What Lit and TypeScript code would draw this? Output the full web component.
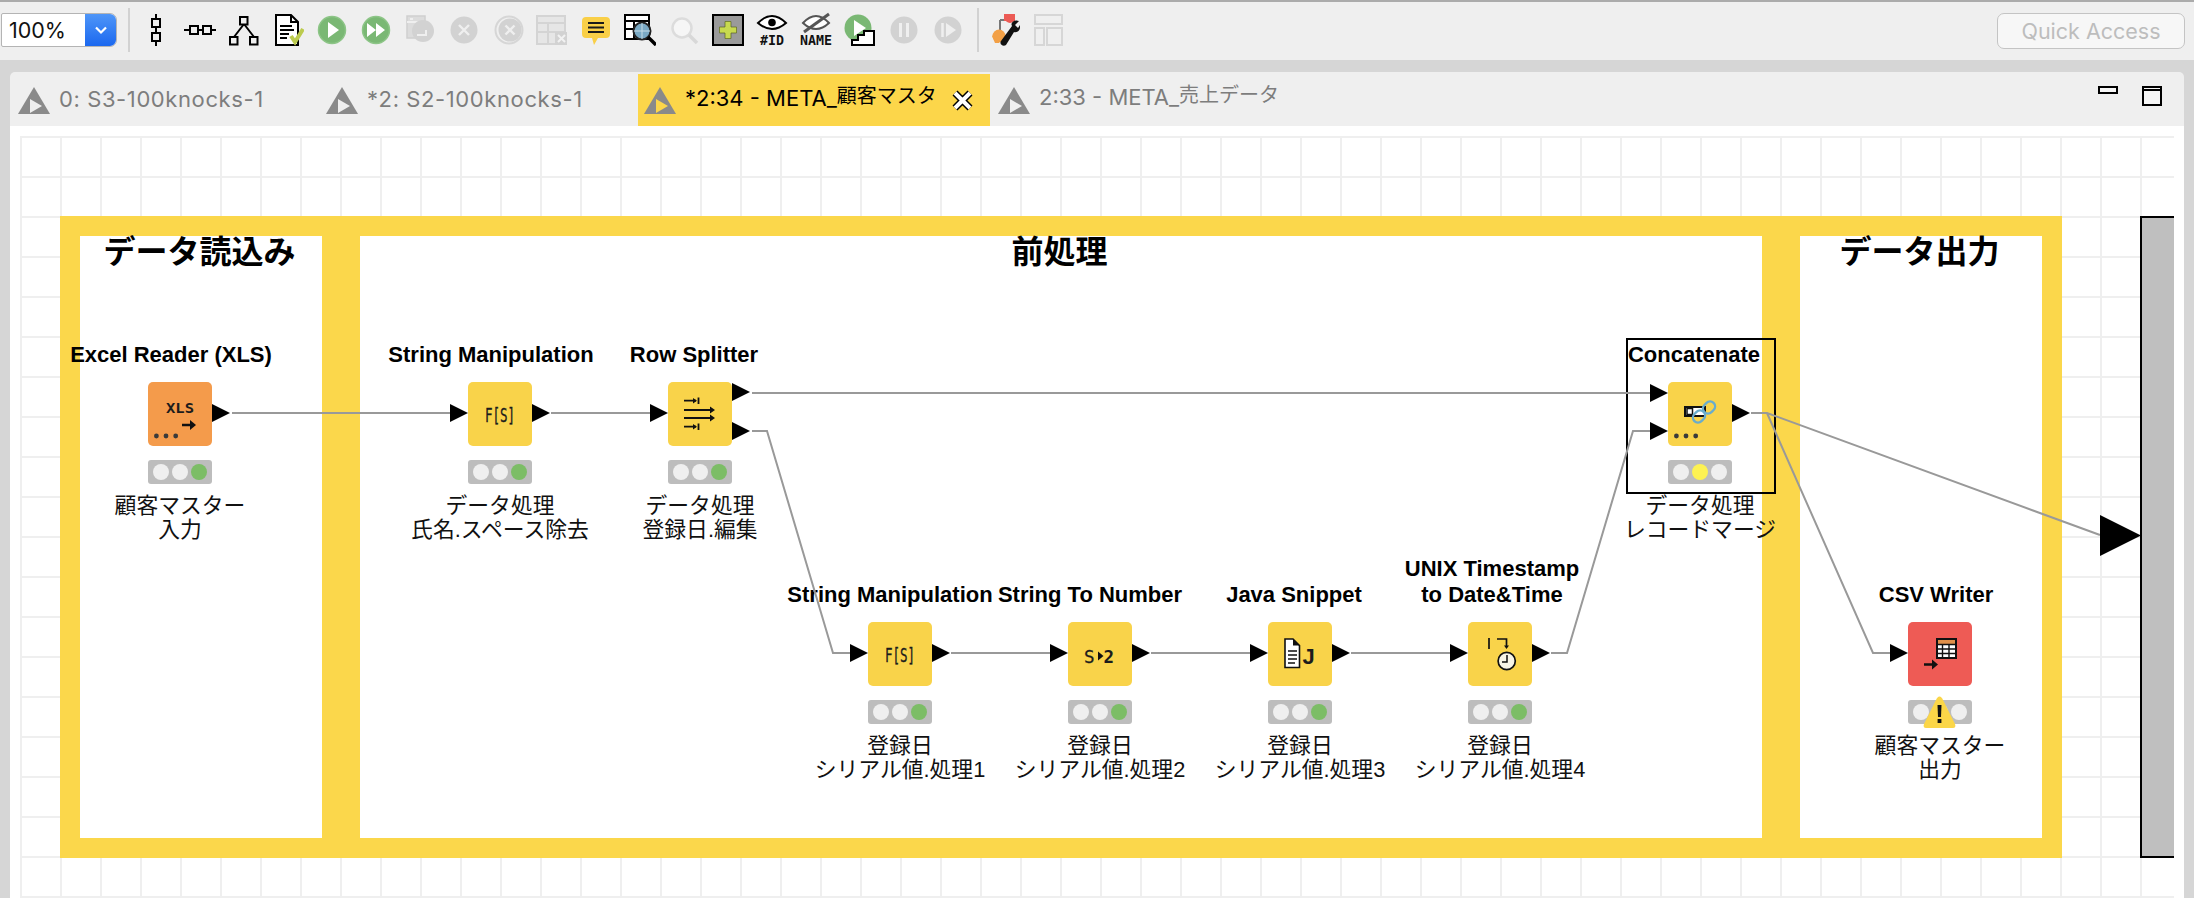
import { LitElement, css, html, svg } from "lit";
import { customElement, property } from "lit/decorators.js";
import { styleMap } from "lit/directives/style-map.js";

// page coordinates of the canvas origin; all workflow data below is in page px
const OX = 10;
const OY = 126;

const mono = `"DejaVu Sans Mono", monospace`;

type NodeData = {
  x: number;
  y: number;
  name: string;
  nameShift: number;
  label: string;
  color: string;
  glyph: unknown;
  lamp: "green" | "yellow" | "warn";
};

const dots = svg`<g fill="#3a3a3a"><circle cx="8.4" cy="54" r="2.4"/><circle cx="18" cy="54" r="2.4"/><circle cx="27.7" cy="54" r="2.4"/></g>`;

const arrow = (x1: number, x2: number, y: number) =>
  svg`<path d="M${x1} ${y}H${x2 - 4}" stroke="#111" stroke-width="2.6" fill="none"/><path d="M${x2 - 6} ${y - 5}L${x2} ${y}L${x2 - 6} ${y + 5}Z" fill="#111"/>`;

const fs = svg`<text x="17" y="40" font-family=${mono} font-size="19" textLength="30" lengthAdjust="spacingAndGlyphs" fill="#1c1c1c" stroke="#1c1c1c" stroke-width="0.35">F[S]</text>`;

const xls = svg`
  <text x="18" y="30.5" font-family=${mono} font-size="14" font-weight="700" textLength="28" lengthAdjust="spacingAndGlyphs" fill="#1c1c1c">XLS</text>
  ${arrow(34, 48, 43)}${dots}`;

const splitter = svg`
  <g stroke="#111" stroke-width="1.8" fill="none">
    <path d="M16 18.7H28M30.5 15.5V22M16 44.7H28M30.5 41.5V48"/>
    <path d="M16 28H43M16 36H43"/>
  </g>
  <g fill="#111">
    <path d="M25 16L29 18.7L25 21.4ZM25 42L29 44.7L25 47.4ZM42 24.5L47 28L42 31.5ZM42 32.5L47 36L42 39.5Z"/>
  </g>`;

const s2n = svg`
  <text x="16" y="41" font-family=${mono} font-size="17.5" fill="#1c1c1c" stroke="#1c1c1c" stroke-width="0.3">S</text>
  <path d="M30 29.5L35.5 34L30 38.5Z" fill="#111"/>
  <text x="35.5" y="41" font-family=${mono} font-size="17.5" font-weight="700" fill="#1c1c1c">2</text>`;

const java = svg`
  <path d="M17 17H25L31.5 23.5V45.5H17Z" fill="#fff" stroke="#111" stroke-width="1.6"/>
  <path d="M25 17V23.5H31.5Z" fill="#111"/>
  <path d="M20 29H29M20 33H29M20 37H29M20 41H27" stroke="#111" stroke-width="1.5"/>
  <text x="34.5" y="41.5" font-family="'Liberation Sans', sans-serif" font-size="22" font-weight="700" fill="#1c1c1c">J</text>`;

const unix = svg`
  <path d="M21 16V27M29 17H38.5V24" stroke="#111" stroke-width="1.7" fill="none"/>
  <path d="M36 23.5H41L38.5 27Z" fill="#111"/>
  <circle cx="38.7" cy="39" r="8.6" fill="#f7f4e6" stroke="#111" stroke-width="1.7"/>
  <path d="M39 33V40H34" stroke="#111" stroke-width="1.5" fill="none"/>`;

const concat = svg`
  <rect x="17" y="25" width="20" height="9" fill="#fff" stroke="#111" stroke-width="2"/>
  <rect x="19" y="26.5" width="5.5" height="6" fill="#fff" stroke="#111" stroke-width="1.5"/>
  <g fill="none" stroke="#6aaccb" stroke-width="2.4">
    <rect x="36" y="19" width="10" height="13" rx="5" transform="rotate(45 41 25.5)"/>
    <rect x="26" y="28" width="10" height="13" rx="5" transform="rotate(45 31 34.5)"/>
  </g>
  ${dots}`;

const csv = svg`
  <rect x="29" y="17" width="19" height="19" fill="#fff" stroke="#111" stroke-width="2"/>
  <rect x="30" y="18" width="17" height="4" fill="#e0904a"/>
  <path d="M29 22.5H48M29 27H48M29 31.5H48M34.5 22V36M41 22V36" stroke="#111" stroke-width="1.4"/>
  ${arrow(16, 30, 42.5)}`;

const YELLOW = "#f9d34a";

const nodes: NodeData[] = [
  { x: 148, y: 382, name: "Excel Reader (XLS)", nameShift: -9, label: "顧客マスター\n入力", color: "#f49b4b", glyph: xls, lamp: "green" },
  { x: 468, y: 382, name: "String Manipulation", nameShift: -9, label: "データ処理\n氏名.スペース除去", color: YELLOW, glyph: fs, lamp: "green" },
  { x: 668, y: 382, name: "Row Splitter", nameShift: -6, label: "データ処理\n登録日.編集", color: YELLOW, glyph: splitter, lamp: "green" },
  { x: 1668, y: 382, name: "Concatenate", nameShift: -6, label: "データ処理\nレコードマージ", color: YELLOW, glyph: concat, lamp: "yellow" },
  { x: 868, y: 622, name: "String Manipulation", nameShift: -10, label: "登録日\nシリアル値.処理1", color: YELLOW, glyph: fs, lamp: "green" },
  { x: 1068, y: 622, name: "String To Number", nameShift: -10, label: "登録日\nシリアル値.処理2", color: YELLOW, glyph: s2n, lamp: "green" },
  { x: 1268, y: 622, name: "Java Snippet", nameShift: -6, label: "登録日\nシリアル値.処理3", color: YELLOW, glyph: java, lamp: "green" },
  { x: 1468, y: 622, name: "UNIX Timestamp\nto Date&Time", nameShift: -8, label: "登録日\nシリアル値.処理4", color: YELLOW, glyph: unix, lamp: "green" },
  { x: 1908, y: 622, name: "CSV Writer", nameShift: -4, label: "顧客マスター\n出力", color: "#ee5b55", glyph: csv, lamp: "warn" },
];

const wires: [number, number][][] = [
  [[232, 413], [450, 413]],
  [[551, 413], [650, 413]],
  [[752, 393], [1650, 393]],
  [[752, 431], [767, 431], [833, 653], [850, 653]],
  [[951, 653], [1050, 653]],
  [[1151, 653], [1250, 653]],
  [[1351, 653], [1450, 653]],
  [[1551, 653], [1567, 653], [1633, 431], [1650, 431]],
  [[1751, 413], [1767, 413], [2100, 535]],
  [[1767, 413], [1873, 653], [1890, 653]],
];

// left edge, vertical centre of each 18px port triangle
const ports: [number, number][] = [
  [212, 413], [450, 413], [532, 413], [650, 413], [732, 392], [732, 431],
  [1650, 393], [1650, 431], [1732, 413],
  [850, 653], [932, 653], [1050, 653], [1132, 653], [1250, 653], [1332, 653], [1450, 653], [1532, 653], [1890, 653],
];

@customElement("wf-node")
export class WfNode extends LitElement {
  @property({ attribute: false }) data!: NodeData;

  static styles = css`
    :host {
      position: absolute;
      width: 64px;
      display: flex;
      flex-direction: column;
      align-items: center;
    }
    .name {
      position: absolute;
      bottom: 100%;
      margin-bottom: 14px;
      left: 50%;
      white-space: pre;
      text-align: center;
      font: 700 22px/26px "Liberation Sans", sans-serif;
      color: #000;
    }
    .box {
      width: 64px;
      height: 64px;
      border-radius: 5px;
      display: block;
    }
    .lamps {
      position: relative;
      width: 64px;
      height: 24px;
      margin-top: 14px;
      background: #bdbdbd;
      border-radius: 3px;
      display: flex;
      align-items: center;
      justify-content: space-around;
      padding: 0 3px;
      box-sizing: border-box;
    }
    .lamp {
      width: 16px;
      height: 16px;
      border-radius: 50%;
      background: #efefef;
    }
    .lamp.green {
      background: #7cbd66;
    }
    .lamp.yellow {
      background: #fdf252;
    }
    .warn {
      position: absolute;
      left: 15px;
      top: -4px;
    }
    .label {
      margin-top: 10px;
      white-space: pre;
      text-align: center;
      width: max-content;
      font: 400 21.8px/24px "Liberation Sans", "Noto Sans CJK JP", sans-serif;
      color: #111;
    }
  `;

  render() {
    const d = this.data;
    return html`
      <div class="name" style=${styleMap({ transform: `translateX(calc(-50% + ${d.nameShift}px))` })}>${d.name}</div>
      <svg class="box" viewBox="0 0 64 64" style=${styleMap({ background: d.color })}>${d.glyph}</svg>
      <div class="lamps">
        <span class="lamp"></span>
        <span class="lamp ${d.lamp === "yellow" ? "yellow" : ""}"></span>
        <span class="lamp ${d.lamp === "green" ? "green" : ""}"></span>
        ${d.lamp === "warn"
          ? html`<svg class="warn" width="33" height="32" viewBox="0 0 33 32">
              <path d="M16.5 0.5C18 0.5 19 2 20 4L32 28C33 30.5 32 32 30 32H3C1 32 0 30.5 1 28L13 4C14 2 15 0.5 16.5 0.5Z" fill="#fbd648"/>
              <path d="M14.5 9H18.5L18 21H15Z" fill="#111"/>
              <rect x="14.6" y="23" width="3.8" height="4" fill="#111"/>
            </svg>`
          : ""}
      </div>
      <div class="label">${d.label}</div>
    `;
  }
}

const ic = (body: unknown) => html`<svg class="ic" width="32" height="32" viewBox="0 0 32 32">${body}</svg>`;
// same scale as ic, with room under the baseline of the caption
const icTall = (body: unknown) => html`<svg class="ic" width="34" height="40" viewBox="-1 -4 34 40">${body}</svg>`;

const greenDisc = svg`<circle cx="16" cy="16" r="13.5" fill="#7ab874" stroke="#8dc587" stroke-width="1.5"/>`;
const grayDisc = svg`<circle cx="16" cy="16" r="13.5" fill="#d2d2d2"/>`;

const tools = [
  ic(svg`<path d="M16 0V32" stroke="#000" stroke-width="2"/><g fill="#efefef" stroke="#000" stroke-width="2"><rect x="12" y="5" width="8" height="8"/><rect x="12" y="19" width="8" height="8"/></g>`),
  ic(svg`<path d="M0 16H32" stroke="#000" stroke-width="2"/><g fill="#efefef" stroke="#000" stroke-width="2"><rect x="6" y="12" width="8" height="8"/><rect x="19" y="12" width="8" height="8"/></g>`),
  ic(svg`<path d="M16 10L6 23M16 10L26 23" stroke="#000" stroke-width="2"/><g fill="#efefef" stroke="#000" stroke-width="2"><rect x="12" y="3" width="7.5" height="7.5"/><rect x="2" y="23" width="7.5" height="7.5"/><rect x="22" y="23" width="7.5" height="7.5"/></g>`),
  ic(svg`<path d="M4 1H19L26 8V31H4Z" fill="#fff" stroke="#000" stroke-width="2"/><path d="M19 1V8H26" fill="none" stroke="#000" stroke-width="2"/><path d="M8 12H20M8 16H22M8 20H17M8 24H15" stroke="#000" stroke-width="2"/><path d="M19 22L23 28L31 15" fill="none" stroke="#bccb4e" stroke-width="4"/>`),
  ic(svg`${greenDisc}<path d="M12 8L23 16L12 24Z" fill="#fff"/>`),
  ic(svg`${greenDisc}<path d="M7 9L16 16L7 23ZM16 9L25 16L16 23Z" fill="#fff"/>`),
  ic(svg`<path d="M3 2H21V24H3Z" fill="#dcdcdc" stroke="#d0d0d0" stroke-width="1.5"/><path d="M3 8H21" stroke="#efefef" stroke-width="2"/><circle cx="19" cy="17" r="11" fill="#d2d2d2"/><path d="M13 21H22V16" stroke="#efefef" stroke-width="2" fill="none"/><rect x="6" y="4" width="3" height="2" fill="#efefef"/>`),
  ic(svg`${grayDisc}<path d="M11 11L21 21M21 11L11 21" stroke="#efefef" stroke-width="2.4"/>`),
  ic(svg`<circle cx="17" cy="16" r="13.5" fill="none" stroke="#d6d6d6" stroke-width="2"/><circle cx="18" cy="16" r="11.5" fill="#d2d2d2"/><path d="M13.5 11.5L22.5 20.5M22.5 11.5L13.5 20.5" stroke="#efefef" stroke-width="2.4"/>`),
  ic(svg`<rect x="1" y="2" width="28" height="28" fill="#e6e6e6" stroke="#d4d4d4" stroke-width="2"/><path d="M1 9H29M1 18H29M12 9V30" stroke="#d4d4d4" stroke-width="2"/><rect x="19" y="18" width="12" height="13" fill="#d2d2d2"/><path d="M22 21L29 28M29 21L22 28" stroke="#f2f2f2" stroke-width="2"/>`),
  ic(svg`<path d="M6 3H26Q30 3 30 7V20Q30 24 26 24H18L14 31L12 24H6Q2 24 2 20V7Q2 3 6 3Z" fill="#f9cf47"/><path d="M8 9H24M8 13.5H24M8 18H24" stroke="#1a1a1a" stroke-width="2.2"/>`),
  ic(svg`<rect x="1" y="1" width="24" height="24" fill="#fff" stroke="#000" stroke-width="2"/><path d="M1 7H25M1 15H25M10 7V25" stroke="#000" stroke-width="2"/><circle cx="18" cy="17" r="8.5" fill="#7aa9c4" stroke="#222" stroke-width="2"/><path d="M18 9V25M10 17H26" stroke="#c6dce6" stroke-width="1"/><path d="M24 23L32 31" stroke="#000" stroke-width="3.4"/>`),
  ic(svg`<circle cx="14" cy="14" r="9.5" fill="#f6f6f6" stroke="#dcdcdc" stroke-width="2.5"/><path d="M21 21L29 29" stroke="#d8d8d8" stroke-width="3.5"/>`),
  ic(svg`<rect x="1" y="1" width="30" height="30" fill="#9a9a9a" stroke="#000" stroke-width="2"/><path d="M16 7V25M7 16H25" stroke="#c8d94f" stroke-width="6"/><path d="M13 7.5H19V13H24.5V19H19V24.5H13V19H7.5V13H13Z" fill="none" stroke="#58602a" stroke-width="0.7"/>`),
  icTall(svg`<path d="M2 9Q16 -5 30 9Q16 21 2 9Z" fill="#fff" stroke="#000" stroke-width="2"/><circle cx="16" cy="8.5" r="3.8" fill="#000"/><text x="4" y="31" font-family=${mono} font-size="13.5" font-weight="700" textLength="24" lengthAdjust="spacingAndGlyphs" fill="#111">#ID</text>`),
  icTall(svg`<path d="M3 9Q16 -5 29 9Q16 21 3 9Z" fill="#fff" stroke="#555" stroke-width="2"/><path d="M4 18L29 0" stroke="#555" stroke-width="3"/><text x="0" y="31" font-family=${mono} font-size="13.5" font-weight="700" textLength="32" lengthAdjust="spacingAndGlyphs" fill="#111">NAME</text>`),
  ic(svg`<circle cx="14" cy="14" r="13.5" fill="#7ab874"/><path d="M10 6L22 14L10 22Z" fill="#fff"/><path d="M8 31V26H14V21H20V17H30V31Z" fill="#fff" stroke="#000" stroke-width="2"/>`),
  ic(svg`${grayDisc}<path d="M12.5 9V23M19.5 9V23" stroke="#efefef" stroke-width="3"/>`),
  ic(svg`${grayDisc}<path d="M10.5 9V23" stroke="#efefef" stroke-width="2.5"/><path d="M14 9L24 16L14 23Z" fill="#efefef"/>`),
];

const tool2 = [
  ic(svg`<path d="M12 6H18M12 6V18" stroke="#777" stroke-width="2" fill="none"/><circle cx="11" cy="22" r="6.5" fill="#f2a046"/><path d="M4 22L11 17V29H7Z" fill="#f2a046"/><circle cx="22" cy="4" r="5" fill="#ec5b55"/><rect x="16" y="0" width="11" height="7" fill="#ec5b55"/><path d="M13 27L24 12C22 9 26 5 31 7L27 11L30 14L32 11C33 17 28 19 26 18L18 31C15 33 11 30 13 27Z" fill="#111"/>`),
  ic(svg`<g fill="none" stroke="#d6d6d6" stroke-width="2"><rect x="3" y="1" width="27" height="9"/><rect x="3" y="14" width="9" height="17"/><rect x="15" y="14" width="15" height="17"/></g>`),
];

const tabIcon = html`<svg class="tab-ic" width="32" height="27" viewBox="0 0 32 27">
  <path d="M16 0L32 27H0Z" fill="#8a8a8a"/>
  <path d="M12 12L24 19L12 26Z" fill="currentColor"/>
</svg>`;

@customElement("app-root")
export class AppRoot extends LitElement {
  static styles = css`
    :host {
      display: flex;
      flex-direction: column;
      width: 2194px;
      height: 898px;
      overflow: hidden;
      background: #d6d6d6;
      font-family: "Inter", "Liberation Sans", "Noto Sans CJK JP", sans-serif;
    }
    .toolbar {
      box-sizing: border-box;
      border-top: 2px solid #ababab;
      height: 60px;
      flex: none;
      background: #efefef;
      display: flex;
      align-items: center;
      padding: 0 9px 2px 1px;
    }
    .combo {
      width: 116px;
      height: 34px;
      display: flex;
      box-sizing: border-box;
      background: #fff;
      border: 1px solid #b4b4b4;
      border-radius: 2px 7px 7px 2px;
      overflow: hidden;
      flex: none;
    }
    .combo-text {
      flex: 1;
      font-size: 21.5px;
      line-height: 32px;
      padding-left: 7px;
      color: #111;
    }
    .combo-btn {
      width: 31px;
      background: linear-gradient(#4f96f8, #1b68ef);
      display: flex;
      align-items: center;
      justify-content: center;
    }
    .sep {
      width: 2px;
      height: 44px;
      background: #d2d2d2;
      flex: none;
    }
    .sep.first {
      margin: 0 4px 0 11px;
    }
    .sep.second {
      margin: 0 3px 0 7px;
    }
    .slot {
      width: 44px;
      flex: none;
      display: flex;
      justify-content: center;
    }
    .ic {
      display: block;
    }
    .quick {
      margin: 2px 0 0 auto;
      width: 188px;
      height: 36px;
      box-sizing: border-box;
      border: 1px solid #c4c4c4;
      border-radius: 7px;
      background: #f7f7f7;
      color: #bdbdbd;
      font-size: 21.5px;
      line-height: 34px;
      text-align: center;
    }
    .main {
      flex: 1;
      min-height: 0;
      margin: 12px 10px 0;
      display: flex;
      flex-direction: column;
      background: #efefef;
      border-radius: 5px 5px 0 0;
    }
    .tabs {
      height: 54px;
      flex: none;
      display: grid;
      grid-template-columns: 308px 320px 352px 1fr auto;
    }
    .tab {
      display: flex;
      align-items: center;
      gap: 9px;
      padding-left: 8px;
      font-size: 22px;
      color: #7d7d7d;
      white-space: nowrap;
    }
    .tab .tab-ic {
      flex: none;
      margin-top: 3px;
      color: #efefef;
    }
    .tab.wide span {
      letter-spacing: 0.6px;
    }
    .tab.active {
      background: #fcd64a;
      color: #000;
      margin-top: 2px;
      padding-left: 6px;
    }
    .tab.active .tab-ic {
      color: #fcd64a;
      margin-top: 1px;
    }
    .tab.raised span {
      position: relative;
      top: -3px;
    }
    .tab .cjk {
      font-size: 20px;
      position: static;
    }
    .tab .close {
      flex: none;
      margin-left: 6px;
    }
    .win {
      display: flex;
      gap: 24px;
      padding: 14px 22px 0 0;
      align-items: flex-start;
    }
    .win-min {
      width: 20px;
      height: 8px;
      box-sizing: border-box;
      border: 2px solid #000;
      background: #f6f6f6;
    }
    .win-max {
      width: 20px;
      height: 20px;
      box-sizing: border-box;
      border: 2px solid #000;
      background: linear-gradient(#f6f6f6 1px, #000 1px, #000 3px, #f6f6f6 3px);
    }
    .canvas {
      flex: 1;
      min-height: 0;
      position: relative;
      background: #fff;
      padding: 10px 10px 0;
      display: flex;
    }
    .grid {
      flex: 1;
      background-image: linear-gradient(#efefef 2px, transparent 2px), linear-gradient(90deg, #efefef 2px, transparent 2px);
      background-size: 40px 40px;
    }
    .frame {
      position: absolute;
      box-sizing: border-box;
      padding: 20px;
      display: flex;
      gap: 38px;
      background: #fbd74b;
    }
    .panel {
      box-sizing: border-box;
      padding-right: 3px;
      background: #fff;
      text-align: center;
      font: 700 32px/32px "Liberation Sans", "Noto Sans CJK JP", sans-serif;
      color: #000;
    }
    .bar {
      position: absolute;
      box-sizing: border-box;
      background: #bfbfbf;
      border-left: 2px solid #000;
      border-top: 2px solid #000;
      border-bottom: 2px solid #000;
    }
    .wires {
      position: absolute;
      left: 0;
      top: 0;
    }
    .select {
      position: absolute;
      box-sizing: border-box;
      border: 2px solid #000;
    }
  `;

  pos(x: number, y: number, w?: number, h?: number) {
    const s: Record<string, string> = { left: `${x - OX}px`, top: `${y - OY}px` };
    if (w !== undefined) s.width = `${w}px`;
    if (h !== undefined) s.height = `${h}px`;
    return styleMap(s);
  }

  renderTab(title: string, cjk: string, cls = "") {
    return html`<div class="tab ${cls}">${tabIcon}<span>${title}<span class="cjk">${cjk}</span></span>${cls.includes("active")
        ? html`<svg class="close" width="21" height="21" viewBox="0 0 21 21">
            <path d="M3 3L18 18M18 3L3 18" stroke="#000" stroke-width="7"/>
            <path d="M3 3L18 18M18 3L3 18" stroke="#fff" stroke-width="4"/>
          </svg>`
        : ""}</div>`;
  }

  render() {
    return html`
      <div class="toolbar">
        <div class="combo">
          <div class="combo-text">100%</div>
          <div class="combo-btn">
            <svg width="14" height="9" viewBox="0 0 14 9"><path d="M2 1.5L7 6.5L12 1.5" fill="none" stroke="#fff" stroke-width="2.2"/></svg>
          </div>
        </div>
        <div class="sep first"></div>
        ${tools.map((t) => html`<div class="slot">${t}</div>`)}
        <div class="sep second"></div>
        ${tool2.map((t) => html`<div class="slot">${t}</div>`)}
        <div class="quick">Quick Access</div>
      </div>
      <div class="main">
        <div class="tabs">
          ${this.renderTab("0: S3-100knocks-1", "", "wide")}
          ${this.renderTab("*2: S2-100knocks-1", "", "wide")}
          ${this.renderTab("*2:34 - META_", "顧客マスタ", "active raised")}
          ${this.renderTab("2:33 - META_", "売上データ", "raised")}
          <div class="win"><div class="win-min"></div><div class="win-max"></div></div>
        </div>
        <div class="canvas">
          <div class="grid"></div>
          <div class="frame" style=${this.pos(60, 216, 2002, 642)}>
            <div class="panel" style="width:242px">データ読込み</div>
            <div class="panel" style="width:1402px">前処理</div>
            <div class="panel" style="width:242px">データ出力</div>
          </div>
          <div class="bar" style=${this.pos(2140, 216, 34, 642)}></div>
          ${nodes.map((n) => html`<wf-node .data=${n} style=${this.pos(n.x, n.y)}></wf-node>`)}
          <div class="select" style=${this.pos(1626, 338, 150, 156)}></div>
          <svg class="wires" width="2174" height="772" viewBox="${OX} ${OY} 2174 772">
            ${wires.map(
              (w) => svg`<polyline points=${w.map((p) => p.join(",")).join(" ")} fill="none" stroke="#999" stroke-width="2"/>`
            )}
            ${ports.map(([x, y]) => svg`<path d="M${x} ${y - 9}L${x + 18} ${y}L${x} ${y + 9}Z" fill="#000"/>`)}
            <path d="M2100 515L2141 535.5L2100 556Z" fill="#000"/>
          </svg>
        </div>
      </div>
    `;
  }
}
